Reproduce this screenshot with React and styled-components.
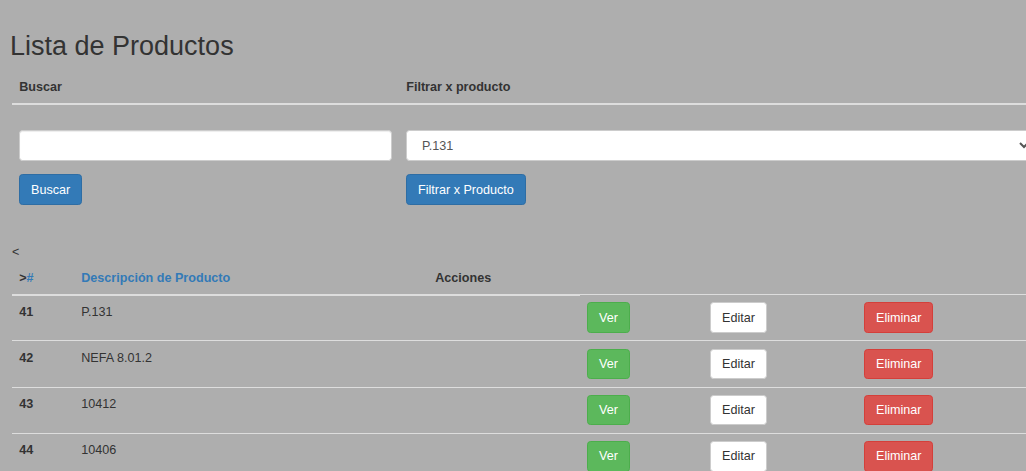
import React from "react";
import styled, { createGlobalStyle } from "styled-components";

const Global = createGlobalStyle`
  html, body {
    margin: 0;
    padding: 0;
    background: #aeaeae;
    overflow: hidden;
  }
  body {
    font-family: "Liberation Sans", Arial, Helvetica, sans-serif;
    font-size: 12.6px;
    line-height: 18px;
    color: #333;
  }
  * { box-sizing: border-box; }
`;

const Page = styled.div`
  padding: 14px 0 0 12px;
  width: 1040px;
`;

const Title = styled.h2`
  margin: 18px 0 9px -2px;
  font-size: 27px;
  line-height: 29.7px;
  font-weight: 400;
  color: #333;
`;

const Table = styled.table`
  width: 1028px;
  table-layout: fixed;
  border-collapse: collapse;
  border-spacing: 0;
  margin-bottom: ${(p) => p.$mb || "0"};
`;

const Th = styled.th`
  text-align: left;
  font-weight: 700;
  padding: 7.2px;
  line-height: 18px;
  vertical-align: bottom;
  border-bottom: 2px solid #ddd;
  width: ${(p) => p.$w || "auto"};
`;

const Td = styled.td`
  padding: 7.2px;
  line-height: 18px;
  vertical-align: top;
  border-top: 1px solid #ddd;
  font-weight: ${(p) => (p.$bold ? 700 : 400)};
`;

const Spacer = styled.div`
  height: 18px;
`;

const FormGroup = styled.div`
  margin-bottom: 13.5px;
`;

const Input = styled.input`
  display: block;
  width: 100%;
  height: 30.6px;
  padding: 5.4px 10.8px;
  font-family: inherit;
  font-size: 12.6px;
  line-height: 18px;
  color: #555;
  background: #fff;
  border: 1px solid #ccc;
  border-radius: 3.6px;
  box-shadow: inset 0 1px 1px rgba(0, 0, 0, 0.075);
  outline: none;
`;

const Select = styled.select`
  display: block;
  width: 100%;
  height: 30.6px;
  padding: 5.4px 10.8px;
  font-family: inherit;
  font-size: 12.6px;
  line-height: 18px;
  color: #555;
  background: #fff;
  border: 1px solid #ccc;
  border-radius: 3.6px;
  outline: none;
`;

const colors = {
  primary: { bg: "#337ab7", border: "#2e6da4", fg: "#fff" },
  success: { bg: "#5cb85c", border: "#4cae4c", fg: "#fff" },
  danger: { bg: "#d9534f", border: "#d43f3a", fg: "#fff" },
  default: { bg: "#fff", border: "#ccc", fg: "#333" },
};

const Button = styled.button`
  display: inline-block;
  padding: 5.4px 10.8px;
  font-family: inherit;
  font-size: 12.6px;
  line-height: 18px;
  font-weight: 400;
  border-radius: 3.6px;
  border: 1px solid ${(p) => colors[p.$v].border};
  background: ${(p) => colors[p.$v].bg};
  color: ${(p) => colors[p.$v].fg};
  cursor: pointer;
  white-space: nowrap;
`;

const Stray = styled.div`
  margin-top: 31px;
  line-height: 18px;
`;

const Link = styled.a`
  color: #337ab7;
  text-decoration: none;
`;

const rows = [
  { id: 41, desc: "P.131" },
  { id: 42, desc: "NEFA 8.01.2" },
  { id: 43, desc: "10412" },
  { id: 44, desc: "10406" },
];

export default function App() {
  return (
    <>
      <Global />
      <Page>
        <Title>Lista de Productos</Title>
        <Table $mb="18px">
          <thead>
            <tr>
              <Th $w="387px">Buscar</Th>
              <Th>Filtrar x producto</Th>
            </tr>
          </thead>
          <tbody>
            <tr>
              <Td>
                <Spacer />
                <FormGroup>
                  <Input type="text" />
                </FormGroup>
                <Button $v="primary">Buscar</Button>
              </Td>
              <Td>
                <Spacer />
                <FormGroup>
                  <Select defaultValue="P.131">
                    <option>P.131</option>
                    <option>NEFA 8.01.2</option>
                    <option>10412</option>
                    <option>10406</option>
                  </Select>
                </FormGroup>
                <Button $v="primary">Filtrar x Producto</Button>
              </Td>
            </tr>
          </tbody>
        </Table>
        <Stray>&lt;</Stray>
        <Table>
          <colgroup>
            <col style={{ width: "62px" }} />
            <col style={{ width: "354px" }} />
            <col style={{ width: "152px" }} />
            <col style={{ width: "123px" }} />
            <col style={{ width: "154px" }} />
            <col />
          </colgroup>
          <thead>
            <tr>
              <Th>
                &gt;<Link href="#">#</Link>
              </Th>
              <Th>
                <Link href="#">Descripción de Producto</Link>
              </Th>
              <Th>Acciones</Th>
            </tr>
          </thead>
          <tbody>
            {rows.map((r) => (
              <tr key={r.id}>
                <Td $bold>{r.id}</Td>
                <Td>{r.desc}</Td>
                <Td />
                <Td>
                  <Button $v="success">Ver</Button>
                </Td>
                <Td>
                  <Button $v="default">Editar</Button>
                </Td>
                <Td>
                  <Button $v="danger">Eliminar</Button>
                </Td>
              </tr>
            ))}
          </tbody>
        </Table>
      </Page>
    </>
  );
}
